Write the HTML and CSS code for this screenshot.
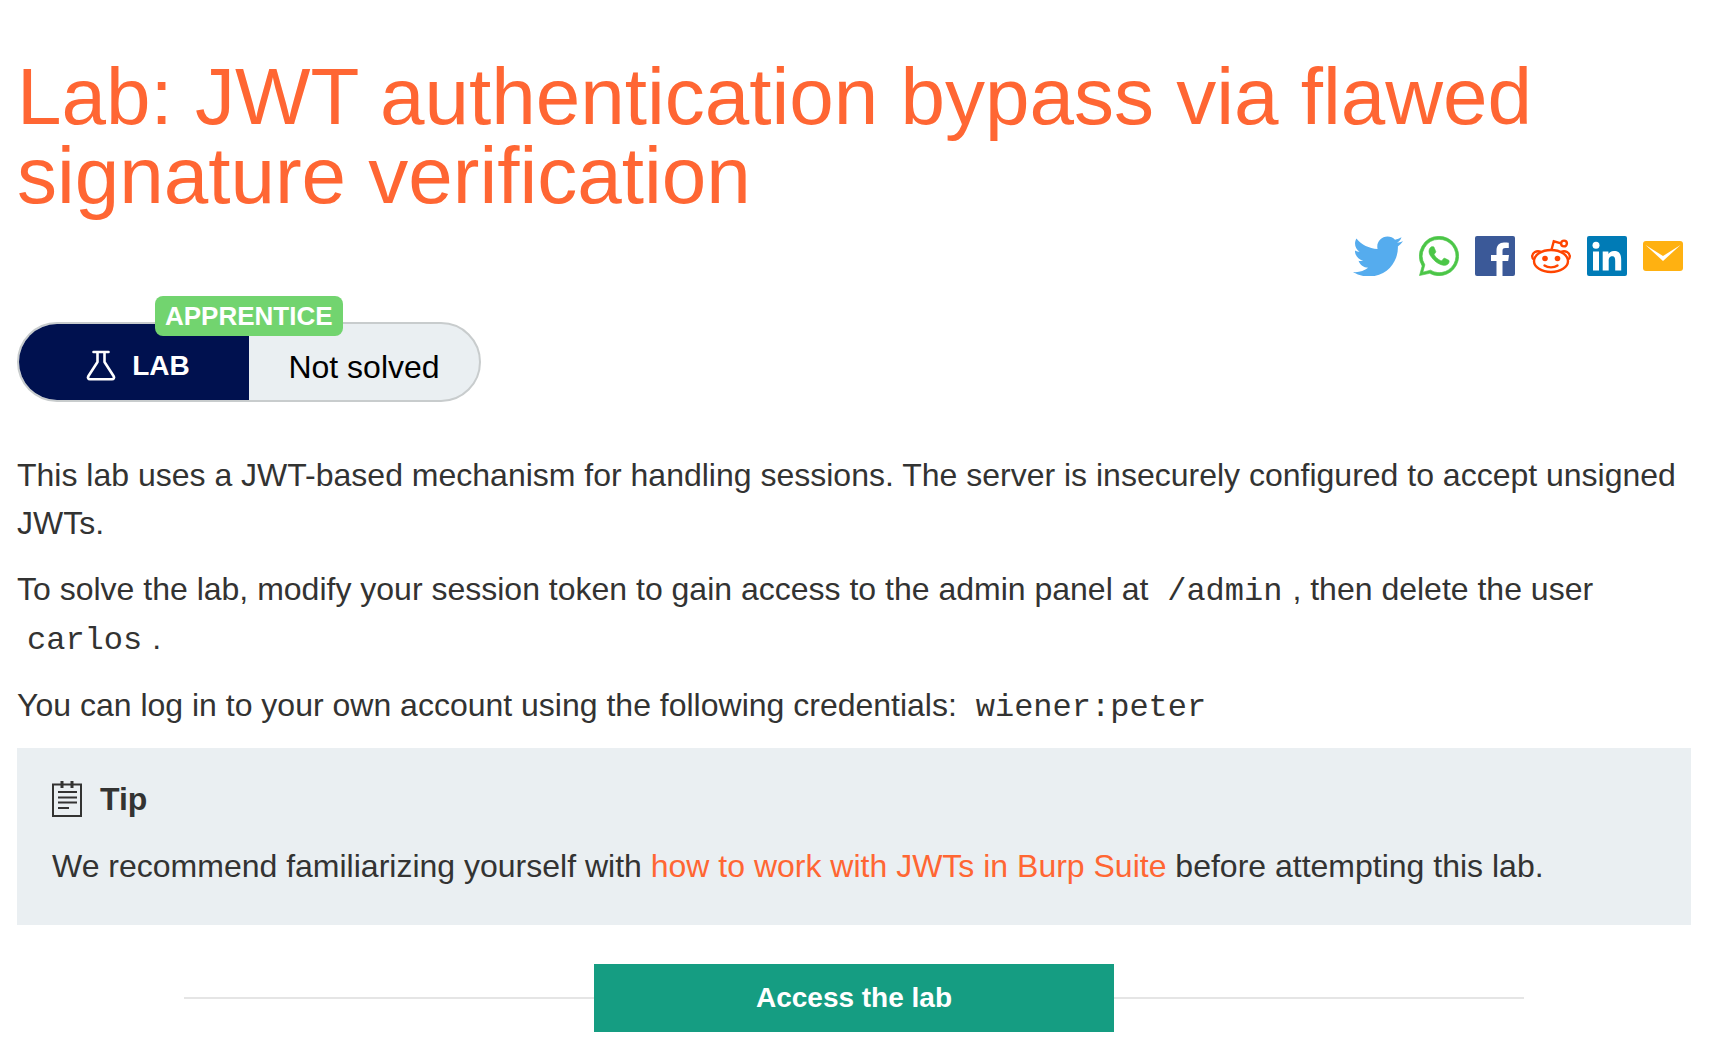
FILE: index.html
```html
<!DOCTYPE html>
<html lang="en">
<head>
<meta charset="utf-8">
<meta name="viewport" content="width=device-width, initial-scale=1">
<title>Lab: JWT authentication bypass via flawed signature verification</title>
<link rel="stylesheet" href="styles.css">
</head>
<body>
<main class="page">
  <h1 class="title">Lab: JWT authentication bypass via flawed signature verification</h1>

  <nav class="share" aria-label="Share">
    <a href="#twitter" aria-label="Twitter"><svg width="50" height="40" viewBox="0 0 24 19.500" preserveAspectRatio="none"><path fill="#55acee" d="M23.954 2.569c-.885.389-1.830.654-2.825.775 1.014-.611 1.794-1.574 2.163-2.723-.951.555-2.005.959-3.127 1.184C19.268.847 17.990.248 16.574.248c-2.717 0-4.920 2.203-4.920 4.917 0 .390.045.765.127 1.124C7.691 6.094 4.066 4.130 1.640 1.161c-.427.722-.666 1.561-.666 2.475 0 1.710.870 3.213 2.188 4.096-.807-.026-1.566-.248-2.228-.616v.061c0 2.385 1.693 4.374 3.946 4.827-.413.111-.849.171-1.296.171-.314 0-.615-.030-.916-.086.631 1.953 2.445 3.377 4.604 3.417-1.680 1.319-3.809 2.105-6.102 2.105-.390 0-.779-.023-1.170-.067 2.189 1.394 4.768 2.209 7.557 2.209 9.054 0 13.999-7.496 13.999-13.986 0-.209 0-.420-.015-.630.961-.689 1.800-1.560 2.460-2.548z"/></svg></a>
    <a href="#whatsapp" aria-label="WhatsApp"><svg width="40" height="40" viewBox="0 0 24 24"><path fill="#4bc647" stroke="#4bc647" stroke-width=".4" d="M17.472 14.382c-.297-.149-1.758-.867-2.030-.967-.273-.099-.471-.148-.670.150-.197.297-.767.966-.940 1.164-.173.199-.347.223-.644.075-.297-.150-1.255-.463-2.390-1.475-.883-.788-1.480-1.761-1.653-2.059-.173-.297-.018-.458.130-.606.134-.133.298-.347.446-.520.149-.174.198-.298.298-.497.099-.198.050-.371-.025-.520-.075-.149-.669-1.612-.916-2.207-.242-.579-.487-.500-.669-.510-.173-.008-.371-.010-.570-.010-.198 0-.520.074-.792.372-.272.297-1.040 1.016-1.040 2.479 0 1.462 1.065 2.875 1.213 3.074.149.198 2.096 3.200 5.077 4.487.709.306 1.262.489 1.694.625.712.227 1.360.195 1.871.118.571-.085 1.758-.719 2.006-1.413.248-.694.248-1.289.173-1.413-.074-.124-.272-.198-.570-.347M12 2a10 10 0 0 0-8.500 15.300l-1.200 4.400 4.600-1.200A10 10 0 1 0 12 2M12 .2a11.800 11.800 0 1 1-5.600 22.200L.3 23.700l1.600-5.700A11.800 11.800 0 0 1 12 .2z"/></svg></a>
    <a href="#facebook" aria-label="Facebook"><svg width="40" height="40" viewBox="0 0 40 40"><rect width="40" height="40" rx="2" fill="#3b5998"/><path fill="#fff" d="M21.500 40V25H16v-6h5.500v-4.500C21.500 9.300 24.500 6.500 29 6.500c2.200 0 4 .1 4.800.3V12h-3.300c-2.500 0-3 1.200-3 3v4H34l-.8 6h-5.700v15z"/></svg></a>
    <a href="#reddit" aria-label="Reddit"><svg width="40" height="40" viewBox="0 0 40 40"><g fill="none" stroke="#ff4500" stroke-width="2.400"><ellipse cx="20" cy="25" rx="17" ry="11"/><path d="M10 15.800C5.500 14 1.200 16.500 1.200 20.500c0 1.700.7 2.700 2.200 3.500M30 15.800c4.500-1.800 8.800.7 8.800 4.700 0 1.700-.7 2.700-2.200 3.500M20.500 13.800l2.300-8.500 7.200 2"/><circle cx="33" cy="7.500" r="2.900"/><path d="M13.500 29.500c3.500 2.500 9.500 2.500 13 0" stroke-linecap="round"/></g><g fill="#ff4500"><circle cx="14" cy="22.500" r="2.800"/><circle cx="26.500" cy="22.500" r="2.800"/></g></svg></a>
    <a href="#linkedin" aria-label="LinkedIn"><svg width="40" height="40" viewBox="0 0 40 40"><rect width="40" height="40" rx="2" fill="#007bb6"/><g fill="#fff"><circle cx="9" cy="9.300" r="3.500"/><path d="M6 15.500h6v19H6zM15.700 15.500h5.700v2.600c.8-1.500 2.700-3 5.600-3 6 0 7.200 4 7.200 9.100v10.300h-6v-9.200c0-2.200 0-5-3-5s-3.500 2.400-3.500 4.800v9.400h-6z"/></g></svg></a>
    <a href="#email" aria-label="Email"><svg width="40" height="40" viewBox="0 0 40 40"><rect y="5" width="40" height="30" rx="3" fill="#ffb111"/><path fill="#fff" d="M2.500 9L20 20 37.500 9 20 25z"/></svg></a>
  </nav>

  <div class="status">
    <span class="level">APPRENTICE</span>
    <div class="kind">
      <svg width="30" height="32" viewBox="0 0 30 32" fill="none" stroke="#fff" stroke-width="2.600" stroke-linecap="round" stroke-linejoin="round" aria-hidden="true"><path d="M7.500 2h15M11.500 2v10L2.300 26.200c-1 1.600 0 3 1.700 3h22c1.700 0 2.700-1.400 1.700-3L18.500 12V2"/></svg>
      <span>LAB</span>
    </div>
    <div class="state">Not solved</div>
  </div>

  <p>This lab uses a JWT-based mechanism for handling sessions. The server is insecurely configured to accept unsigned JWTs.</p>
  <p>To solve the lab, modify your session token to gain access to the admin panel at <code>/admin</code>, then delete the user <code>carlos</code>.</p>
  <p>You can log in to your own account using the following credentials: <code>wiener:peter</code></p>

  <section class="tip">
    <h2>
      <svg width="30" height="36" viewBox="0 0 30 36" fill="none" stroke="#333332" aria-hidden="true"><path stroke-width="2" d="M1 3.500h28V35H1zM6 11h19M6 16.500h19M6 21.500h19M6 27h11"/><path stroke-width="3" d="M10 0v7M20 0v7"/></svg>
      Tip
    </h2>
    <p>We recommend familiarizing yourself with <a href="#jwt">how to work with JWTs in Burp Suite</a> before attempting this lab.</p>
  </section>

  <div class="launch">
    <button type="button">Access the lab</button>
  </div>
</main>
</body>
</html>
```
FILE: styles.css
```css
* { box-sizing: border-box; }

body {
  margin: 0;
  background: #fff;
  color: #333332;
  font: 32px/48px "Liberation Sans", Arial, sans-serif;
}

.page { padding: 57px 19px 28px 17px; }

.title {
  margin: 0;
  color: #ff6633;
  font-size: 80px;
  font-weight: 400;
  line-height: 79px;
}

.share {
  display: flex;
  justify-content: flex-end;
  gap: 16px;
  margin: 21px 8px 46px 0;
}

.share a { display: block; height: 40px; }
.share svg { display: block; }

.status {
  position: relative;
  display: flex;
  width: 464px;
  height: 80px;
  margin-bottom: 49px;
  border: 2px solid #c8cccd;
  border-radius: 40px;
  background: #eaeff2;
  color: #000;
}

.kind, .state {
  display: flex;
  width: 50%;
  align-items: center;
  justify-content: center;
  padding-top: 9px;
}

.kind {
  gap: 16px;
  padding: 7px 0 0 8px;
  border-radius: 38px 0 0 38px;
  background: #00114f;
  color: #fff;
  font-size: 28px;
  font-weight: 700;
}

.level {
  position: absolute;
  top: -28px;
  left: 136px;
  height: 40px;
  padding: 0 10px;
  border-radius: 8px;
  background: #72d46f;
  color: #fff;
  font-size: 26px;
  font-weight: 700;
  line-height: 40px;
}

p { margin: 0 0 18px; }

code {
  padding: 0 10px;
  font: 32px/44px "Liberation Mono", "Courier New", monospace;
}

.tip {
  padding: 27px 35px 35px;
  background: #eaeff2;
}

.tip h2 {
  display: flex;
  align-items: center;
  gap: 18px;
  margin: 0 0 19px;
  font-size: 32px;
  line-height: 48px;
}

.tip p { margin: 0; }

.tip a { color: #ff6633; text-decoration: none; }

.launch {
  display: flex;
  align-items: center;
  width: 80%;
  margin: 39px auto 0;
}

.launch::before, .launch::after {
  content: "";
  flex: 1;
  height: 2px;
  background: #e5e5e5;
}

.launch button {
  width: 520px;
  height: 68px;
  padding: 0;
  border: 0;
  background: #159d82;
  color: #fff;
  font: 700 28px/32px "Liberation Sans", Arial, sans-serif;
}
```
